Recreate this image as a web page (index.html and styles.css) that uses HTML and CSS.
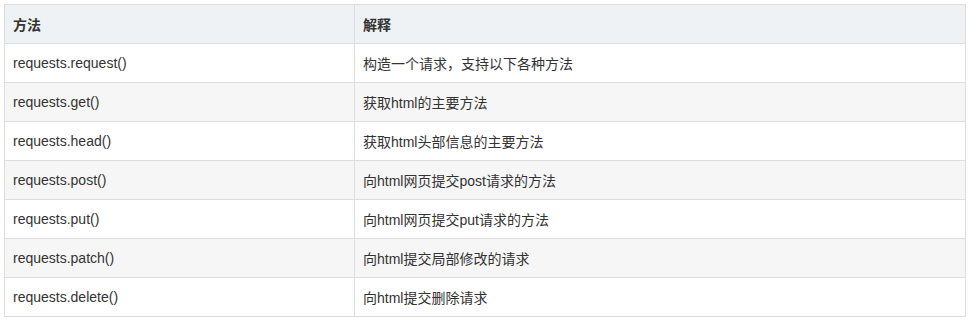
FILE: index.html
```html
<!DOCTYPE html>
<html lang="zh-CN">
<head>
<meta charset="utf-8">
<link rel="stylesheet" href="styles.css">
</head>
<body>
<table class="api-table">
  <thead>
    <tr><th class="col-method">方法</th><th>解释</th></tr>
  </thead>
  <tbody>
    <tr><td>requests.request()</td><td>构造一个请求，支持以下各种方法</td></tr>
    <tr><td>requests.get()</td><td>获取html的主要方法</td></tr>
    <tr><td>requests.head()</td><td>获取html头部信息的主要方法</td></tr>
    <tr><td>requests.post()</td><td>向html网页提交post请求的方法</td></tr>
    <tr><td>requests.put()</td><td>向html网页提交put请求的方法</td></tr>
    <tr><td>requests.patch()</td><td>向html提交局部修改的请求</td></tr>
    <tr><td>requests.delete()</td><td>向html提交删除请求</td></tr>
  </tbody>
</table>
</body>
</html>
```
FILE: styles.css
```css
html, body {
  margin: 0;
  background: #fff;
}
body {
  padding: 4px;
  font-family: "Liberation Sans", Arial, "Noto Sans CJK SC", sans-serif;
  font-size: 14px;
  color: #333;
}
.api-table {
  border-collapse: collapse;
  width: 962px;
  table-layout: fixed;
}
.api-table th,
.api-table td {
  border: 1px solid #dddddd;
  height: 39px;
  padding: 0 9px 0 8px;
  text-align: left;
  vertical-align: middle;
  box-sizing: border-box;
}
.api-table th {
  background: #eff2f5;
  font-weight: bold;
}
.api-table .col-method {
  width: 350px;
}
.api-table tbody tr:nth-child(even) td {
  background: #f6f6f6;
}
```
